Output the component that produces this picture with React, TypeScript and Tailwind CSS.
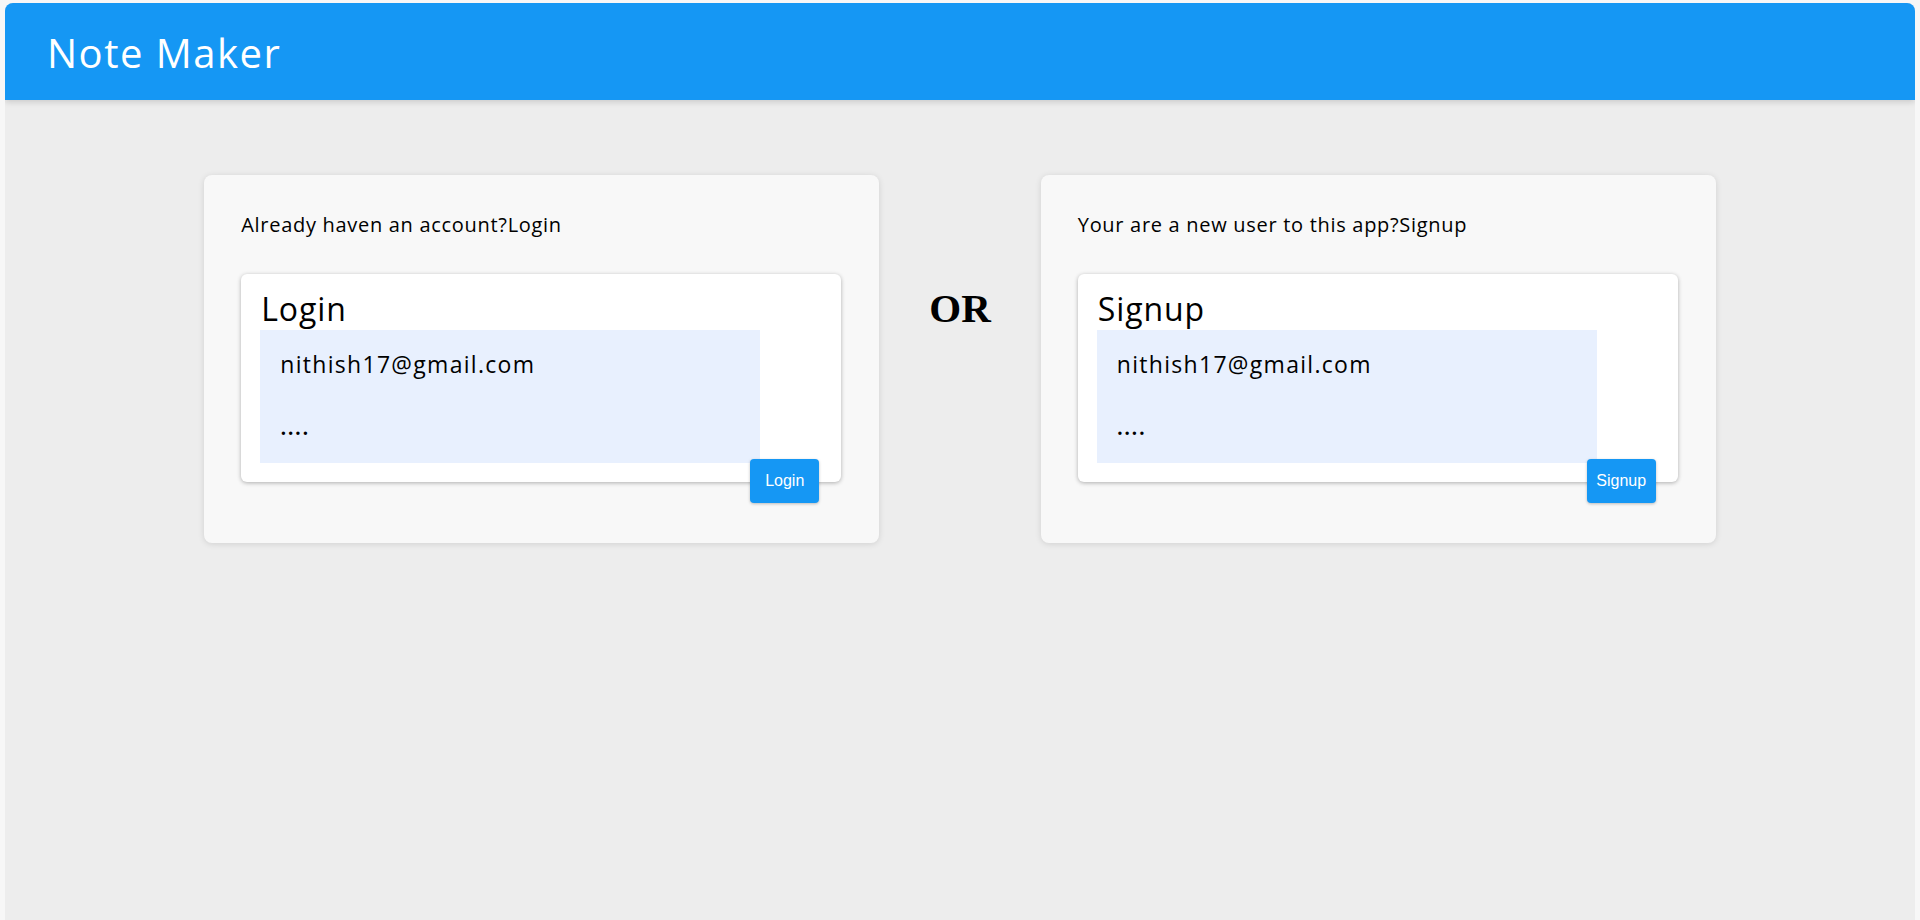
import { useState } from 'react';

interface AuthCardProps {
  prompt: string;
  title: string;
  action: string;
}

const AuthCard = ({ prompt, title, action }: AuthCardProps) => {
  const [email, setEmail] = useState('nithish17@gmail.com');
  const [password, setPassword] = useState('....');

  return (
    <div className="w-[675px] h-[368px] shrink-0 rounded-lg bg-[#f8f8f8] shadow-[0_1px_6px_rgba(0,0,0,0.12)] pt-[38px] px-[37px]">
      <p className="text-[20px] leading-[24px] text-black font-['Open_Sans',sans-serif] font-medium tracking-[0.7px]">
        {prompt}
      </p>
      <div className="mt-[37px] h-[208px] w-[600px] rounded-md bg-white shadow-[0_1px_4px_rgba(0,0,0,0.3)] pt-[14px] px-[19px]">
        <h2 className="text-[32px] leading-[42px] text-black font-['Open_Sans',sans-serif] font-medium tracking-[0.9px] pl-[1px]">
          {title}
        </h2>
        <div className="w-[500px] bg-[#e8f0fe]">
          <input
            value={email}
            onChange={(e) => setEmail(e.target.value)}
            className="block w-full h-[67px] bg-transparent pl-[20px] text-[23px] tracking-[1.3px] text-black outline-none font-['Open_Sans',sans-serif]"
          />
          <input
            value={password}
            onChange={(e) => setPassword(e.target.value)}
            className="block w-full h-[66px] bg-transparent pl-[20px] pb-[8px] text-[23px] tracking-[1px] text-black outline-none font-['Open_Sans',sans-serif] font-semibold"
          />
        </div>
        <div className="flex justify-end -mt-[4px] pr-[3px]">
          <button className="h-[44px] min-w-[69px] px-[8px] rounded bg-[#1597f4] text-white text-[16px] font-['Liberation_Sans',Arial,sans-serif] shadow-[0_1px_3px_rgba(0,0,0,0.25)]">
            {action}
          </button>
        </div>
      </div>
    </div>
  );
};

export default function App() {
  return (
    <div className="min-h-[920px] bg-[#f7f7f7] pt-[3px] px-[5px]">
      <div className="min-h-[917px] rounded-t-lg bg-[#ededed] overflow-hidden">
        <header className="h-[97px] bg-[#1597f4] flex items-center pl-[42px] shadow-[0_2px_6px_rgba(0,0,0,0.15)]">
          <h1 className="text-[40px] text-white font-['Open_Sans',sans-serif] font-medium tracking-[1.5px] leading-none pt-[2px]">
            Note Maker
          </h1>
        </header>

        <main className="flex items-start justify-center gap-[50px] pt-[75px]">
          <AuthCard
            prompt="Already haven an account?Login"
            title="Login"
            action="Login"
          />
          <div className="pt-[113px]">
            <span className="text-[41px] leading-none font-bold text-black font-['Liberation_Serif','Times_New_Roman',serif]">
              OR
            </span>
          </div>
          <AuthCard
            prompt="Your are a new user to this app?Signup"
            title="Signup"
            action="Signup"
          />
        </main>
      </div>
    </div>
  );
}
